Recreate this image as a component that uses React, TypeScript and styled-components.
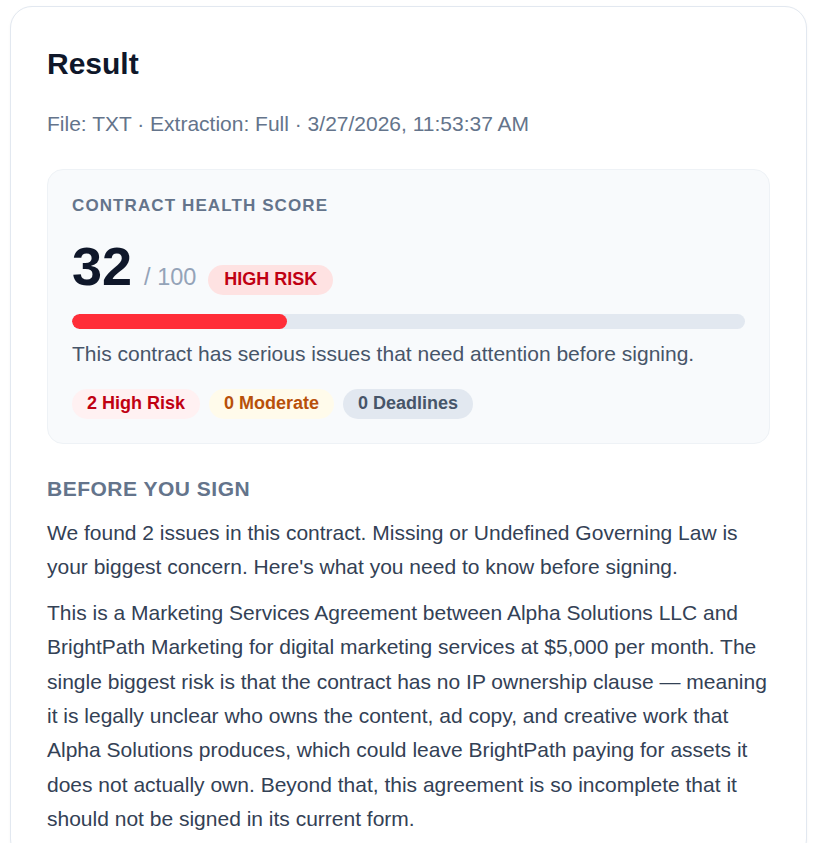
import React from "react";
import styled, { createGlobalStyle } from "styled-components";

const Global = createGlobalStyle`
  html, body { margin: 0; padding: 0; background: #ffffff; }
  body { font-family: "Liberation Sans", Arial, sans-serif; }
  * { box-sizing: border-box; }
`;

const Page = styled.div`
  padding: 6px 20px 0 10px;
`;

const Card = styled.section`
  background: #ffffff;
  border: 1px solid #e2e8f0;
  border-radius: 22px;
  padding: 39px 36px 24px;
  box-shadow: 0 1px 3px rgba(15, 23, 42, 0.04);
`;

const Title = styled.h1`
  margin: 0;
  font-size: 30px;
  font-weight: 700;
  color: #0f172a;
  line-height: 36px;
`;

const Meta = styled.div`
  margin-top: 28px;
  font-size: 21px;
  color: #64748b;
  line-height: 28px;
`;

const ScoreBox = styled.div`
  margin-top: 31px;
  background: #f8fafc;
  border: 1px solid #eef2f6;
  border-radius: 16px;
  padding: 24px;
`;

const BoxLabel = styled.div`
  font-size: 17px;
  font-weight: 700;
  letter-spacing: 0.065em;
  text-transform: uppercase;
  color: #64748b;
  line-height: 24px;
`;

const ScoreRow = styled.div`
  margin-top: 21px;
  display: flex;
  align-items: baseline;
  gap: 12px;
`;

const ScoreNum = styled.span`
  font-size: 54px;
  font-weight: 700;
  color: #0f172a;
  line-height: 1;
`;

const ScoreMax = styled.span`
  font-size: 23.5px;
  color: #94a3b8;
  line-height: 1;
`;

const Badge = styled.span`
  display: inline-flex;
  align-items: center;
  height: 30px;
  padding: 0 16px;
  border-radius: 999px;
  background: #fee2e2;
  color: #c00012;
  font-size: 18px;
  font-weight: 700;
`;

const Track = styled.div`
  margin-top: 19px;
  height: 15px;
  border-radius: 999px;
  background: #e2e8f0;
  overflow: hidden;
`;

const Fill = styled.div`
  height: 100%;
  border-radius: 999px;
  background: #ff2d38;
`;

const Description = styled.p`
  margin: 12px 0 0;
  font-size: 21px;
  line-height: 26px;
  color: #475569;
`;

const Chips = styled.div`
  margin-top: 22px;
  display: flex;
  gap: 9px;
`;

const Chip = styled.span<{ $tone: "red" | "amber" | "slate" }>`
  display: inline-flex;
  align-items: center;
  height: 30px;
  padding: 0 15px;
  border-radius: 999px;
  font-size: 18px;
  font-weight: 700;
  background: ${(p) =>
    p.$tone === "red" ? "#fff1f2" : p.$tone === "amber" ? "#fffbeb" : "#e2e8f0"};
  color: ${(p) =>
    p.$tone === "red" ? "#c00012" : p.$tone === "amber" ? "#b8500a" : "#475569"};
`;

const SectionTitle = styled.h2`
  margin: 32px 0 0;
  font-size: 21px;
  font-weight: 700;
  letter-spacing: 0.5px;
  text-transform: uppercase;
  color: #64748b;
  line-height: 26px;
`;

const Para = styled.p`
  margin: 14px 0 0;
  font-size: 21px;
  line-height: 34.3px;
  color: #334155;
  & + & {
    margin-top: 12px;
  }
`;

export default function App() {
  const score = 32;
  return (
    <>
      <Global />
      <Page>
        <Card>
          <Title>Result</Title>
          <Meta>File: TXT · Extraction: Full · 3/27/2026, 11:53:37 AM</Meta>
          <ScoreBox>
            <BoxLabel>Contract Health Score</BoxLabel>
            <ScoreRow>
              <ScoreNum>{score}</ScoreNum>
              <ScoreMax>/ 100</ScoreMax>
              <Badge>HIGH RISK</Badge>
            </ScoreRow>
            <Track>
              <Fill style={{ width: `${score}%` }} />
            </Track>
            <Description>
              This contract has serious issues that need attention before signing.
            </Description>
            <Chips>
              <Chip $tone="red">2 High Risk</Chip>
              <Chip $tone="amber">0 Moderate</Chip>
              <Chip $tone="slate">0 Deadlines</Chip>
            </Chips>
          </ScoreBox>
          <SectionTitle>Before You Sign</SectionTitle>
          <Para>
            We found 2 issues in this contract. Missing or Undefined Governing Law is
            your biggest concern. Here's what you need to know before signing.
          </Para>
          <Para>
            This is a Marketing Services Agreement between Alpha Solutions LLC and
            BrightPath Marketing for digital marketing services at $5,000 per month. The
            single biggest risk is that the contract has no IP ownership clause — meaning
            it is legally unclear who owns the content, ad copy, and creative work that
            Alpha Solutions produces, which could leave BrightPath paying for assets it
            does not actually own. Beyond that, this agreement is so incomplete that it
            should not be signed in its current form.
          </Para>
        </Card>
      </Page>
    </>
  );
}
